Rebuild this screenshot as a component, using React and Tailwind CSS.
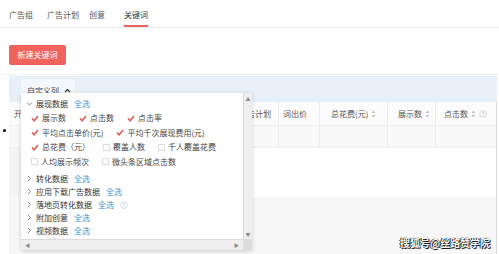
import React from "react";

const FONT = "font-['Noto_Sans_CJK_SC','Noto_Sans',sans-serif]";

const Check = () => (
  <svg width="8" height="7" viewBox="0 0 8 7" className="shrink-0">
    <path d="M1 3.6 L3.1 5.8 L7 1" fill="none" stroke="#e5534b" strokeWidth="1.5" />
  </svg>
);

const Box = () => (
  <span className="w-[7px] h-[7px] shrink-0 border border-[#dcdcdc] bg-white" />
);

const ChevronDown = () => (
  <svg width="7" height="6" viewBox="0 0 7 6" className="shrink-0">
    <path d="M1 1.5 L3.5 4 L6 1.5" fill="none" stroke="#888" strokeWidth="1" />
  </svg>
);

const ChevronRight = () => (
  <svg width="7" height="7" viewBox="0 0 7 7" className="shrink-0">
    <path d="M2 1 L4.5 3.5 L2 6" fill="none" stroke="#888" strokeWidth="1" />
  </svg>
);

const Sort = () => (
  <svg width="5" height="8" viewBox="0 0 5 8" className="ml-[3px]">
    <path d="M2.5 0.5 L4.5 3 L0.5 3Z" fill="#c4c4c4" />
    <path d="M0.5 5 L4.5 5 L2.5 7.5Z" fill="#c4c4c4" />
  </svg>
);

const Info = () => (
  <svg width="8" height="8" viewBox="0 0 8 8" className="ml-[3px]">
    <circle cx="4" cy="4" r="3.4" fill="none" stroke="#cfcfcf" strokeWidth="0.8" />
    <text x="4" y="6" fontSize="5" textAnchor="middle" fill="#bbb">?</text>
  </svg>
);

const Item = ({ checked, label }) => (
  <span className="flex items-center gap-[3px]">
    {checked ? <Check /> : <Box />}
    <span>{label}</span>
  </span>
);

const checkRows = [
  [
    [true, "展示数"],
    [true, "点击数"],
    [true, "点击率"],
  ],
  [
    [true, "平均点击单价(元)"],
    [true, "平均千次展现费用(元)"],
  ],
  [
    [true, "总花费（元）"],
    [false, "覆盖人数"],
    [false, "千人覆盖花费"],
  ],
  [
    [false, "人均展示频次"],
    [false, "微头条区域点击数"],
  ],
];

const groups = [
  { name: "转化数据" },
  { name: "应用下载广告数据" },
  { name: "落地页转化数据", info: true },
  { name: "附加创意" },
  { name: "视频数据" },
];

const columns = [
  { label: "开关", w: "w-[221px]", pl: "pl-[5px]" },
  { label: "广告计划", w: "w-[48px]", pl: "pl-[8px]" },
  { label: "词出价", w: "w-[41px]", pl: "pl-[4px]" },
  { label: "总花费(元)", w: "w-[68px]", pl: "pl-[11px]", sort: true },
  { label: "展示数", w: "w-[48px]", pl: "pl-[10px]", sort: true },
  { label: "点击数", w: "flex-1", pl: "pl-[8px]", sort: true, info: true },
];

const tabs = [
  { label: "广告组", w: "w-[38px]" },
  { label: "广告计划", w: "w-[42px]" },
  { label: "创意", w: "w-[35px]" },
  { label: "关键词", active: true },
];

const ColumnMenu = () => (
  <div className="absolute left-[21px] top-[93px] w-[231px] h-[157px] bg-white shadow-[0_1px_4px_rgba(0,0,0,0.18)] flex flex-col text-[8px] text-[#444]">
    <div className="flex flex-1 min-h-0">
      <div className="flex-1 pt-[3px]">
        <div className="h-[15px] flex items-center pl-[5px] gap-[3px]">
          <ChevronDown />
          <span className="text-[#333]">展现数据</span>
          <span className="ml-[3px] text-[#4d8ed0]">全选</span>
        </div>
        {checkRows.map((row, i) => (
          <div key={i} className="h-[14.5px] flex items-center pl-[10px] gap-x-[13px]">
            {row.map(([c, l]) => (
              <Item key={l} checked={c} label={l} />
            ))}
          </div>
        ))}
        <div className="mt-[3px]">
          {groups.map((g) => (
            <div key={g.name} className="h-[13px] flex items-center pl-[5px] gap-[3px]">
              <ChevronRight />
              <span className="text-[#333]">{g.name}</span>
              <span className="ml-[3px] text-[#4d8ed0]">全选</span>
              {g.info && <Info />}
            </div>
          ))}
        </div>
      </div>
      <div className="w-[9px] bg-[#eeeeee] border-l border-[#dadada] flex flex-col items-center justify-between py-[2px] text-[5px] text-[#888]">
        <span>▲</span>
        <span>▼</span>
      </div>
    </div>
    <div className="h-[11px] flex">
      <div className="flex-1 bg-[#eeeeee] border-t border-[#dadada] flex items-center justify-between px-[4px] text-[5px] text-[#888]">
        <span>◀</span>
        <span>▶</span>
      </div>
      <div className="w-[9px] bg-[#dcdcdc]" />
    </div>
  </div>
);

export default function App() {
  return (
    <div className={`relative w-[499px] h-[254px] overflow-hidden bg-white ${FONT}`}>
      <div className="h-[28px] border-b border-[#ececec] flex pl-[9px] text-[8px] text-[#555]">
        {tabs.map((t) => (
          <div
            key={t.label}
            className={`${t.w || ""} h-full flex items-center pt-[4px]`}
          >
            <span
              className={`h-full flex items-center border-b-2 ${
                t.active ? "border-[#e9605a] text-[#333]" : "border-transparent"
              }`}
            >
              {t.label}
            </span>
          </div>
        ))}
      </div>

      <div className="pt-[11px] pb-[9px] pl-[9px] border-b border-[#f2f2f2]">
        <button className="w-[57px] h-[20px] rounded-[2px] bg-[#f0625c] text-white text-[8px]">
          新建关键词
        </button>
      </div>

      <div className="mt-[1px] ml-[9px] mr-[2px] h-[26px] bg-[#e7f0f8] flex items-end pl-[12px]">
        <div className="w-[54px] h-[23px] bg-[#f3f7fb] flex items-center pl-[6px] gap-[5px] text-[8px] text-[#444]">
          自定义列
          <svg width="7" height="5" viewBox="0 0 7 5">
            <path d="M1 4 L3.5 1.5 L6 4" fill="none" stroke="#333" strokeWidth="1.2" />
          </svg>
        </div>
      </div>

      <div className="flex">
        <div className="w-[9px] flex justify-center pt-[27px]">
          <span className="w-[3px] h-[3px] rounded-full bg-black" />
        </div>
        <div className="flex-1 mr-[2px] border-r border-[#d9d9d9] text-[8px] text-[#555]">
          <div className="h-[24px] flex bg-[#fcfcfc] border-b border-[#eeeeee]">
            {columns.map((c, i) => (
              <div
                key={c.label}
                className={`${c.w} ${c.pl} flex items-center ${i > 0 ? "border-l border-[#ececec]" : ""}`}
              >
                {c.label}
                {c.sort && <Sort />}
                {c.info && <Info />}
              </div>
            ))}
          </div>
          <div className="h-[22px] flex bg-[#f9f9f9] border-b border-[#eeeeee]">
            {columns.map((c, i) => (
              <div
                key={c.label}
                className={`${c.w} ${i > 0 ? "border-l border-[#ececec]" : ""}`}
              />
            ))}
          </div>
          <div className="h-[49px] flex">
            <div className="w-[221px] bg-[#f4f4f4]" />
            <div className="flex-1 bg-white" />
          </div>
          <div className="h-[60px] bg-[#f7f7f7] border-b border-[#e4e4e4]" />
        </div>
      </div>

      <ColumnMenu />

      <div className="absolute right-[9px] bottom-[4px] text-[10px] font-bold text-white [text-shadow:0_0_1px_#000,1px_1px_0_#222,-1px_0_0_#333]">
        搜狐号@丝路赞学院
      </div>
    </div>
  );
}
